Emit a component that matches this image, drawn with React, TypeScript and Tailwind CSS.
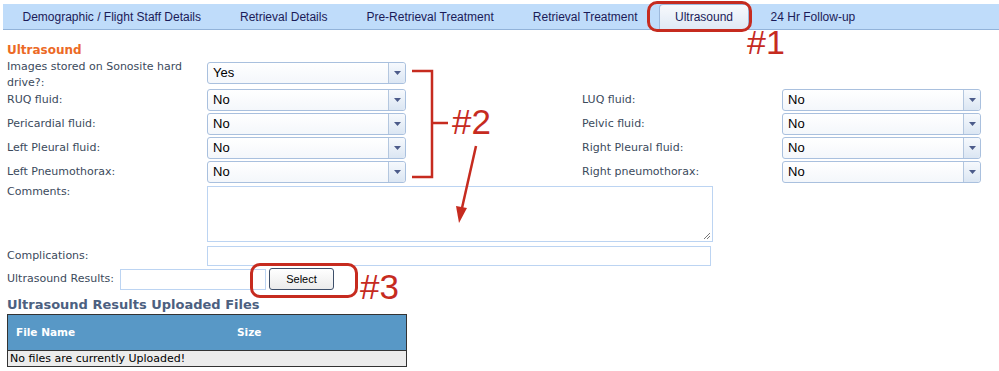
import React from "react"

const tabs = ["Demographic / Flight Staff Details", "Retrieval Details", "Pre-Retrieval Treatment", "Retrieval Treatment", "Ultrasound", "24 Hr Follow-up"]

const rows = [
    { left: "RUQ fluid:", right: "LUQ fluid:" },
    { left: "Pericardial fluid:", right: "Pelvic fluid:" },
    { left: "Left Pleural fluid:", right: "Right Pleural fluid:" },
    { left: "Left Pneumothorax:", right: "Right pneumothorax:" },
]

const Dropdown = ({ value }: { value: string }) => (
    <div className="w-[199px] h-[22px] flex border border-[#a9c0de] rounded-[3px] bg-gradient-to-b from-white to-[#f4f7fb] font-['Liberation_Sans'] text-[13px] text-black">
        <div className="flex-1 flex items-center pl-[5px]">{value}</div>
        <div className="w-[17px] flex items-center justify-center border-l border-[#b4c7df] bg-gradient-to-b from-[#f6f9fd] to-[#dbe6f3] rounded-r-[3px]">
            <svg width="7" height="4" viewBox="0 0 7 4"><path d="M0 0h7L3.5 4z" fill="#4c5b8a" /></svg>
        </div>
    </div>
)

const Label = ({ children, className = "" }: { children: React.ReactNode; className?: string }) => (
    <div className={`w-[200px] text-[11px] leading-[16px] text-[#3b4a5c] ${className}`}>{children}</div>
)

export default function App() {
    return (
        <div className="relative w-[999px] h-[371px] bg-white overflow-hidden font-['DejaVu_Sans',sans-serif]">
            {/* tab strip */}
            <div className="mt-[4px] ml-[3px] h-[26px] flex bg-[#bfdcfa] border-b border-[#92b3d9] font-['Liberation_Sans'] text-[12px] text-[#1b1b58]">
                {tabs.map((tab) =>
                    tab === "Ultrasound" ? (
                        <div key={tab} className="mx-[2px] px-[15px] flex items-center rounded-t-[4px] border border-b-0 border-[#9db9dc] bg-gradient-to-b from-[#f7f9fc] to-[#dfe9f5]">{tab}</div>
                    ) : (
                        <div key={tab} className="px-[19.5px] flex items-center">{tab}</div>
                    )
                )}
            </div>

            <div className="pl-[7px]">
                <div className="mt-[12px] h-[16px] leading-[16px] text-[12px] font-bold text-[#ec6a26]">Ultrasound</div>

                <div className="mt-[4px] h-[27px] flex items-start">
                    <Label className="-mt-[3px] pr-[20px]">Images stored on Sonosite hard drive?:</Label>
                    <Dropdown value="Yes" />
                </div>
                {rows.map((row) => (
                    <div key={row.left} className="h-[24px] flex items-start">
                        <Label className="h-[22px] flex items-center">{row.left}</Label>
                        <Dropdown value="No" />
                        <Label className="ml-[176px] h-[22px] flex items-center">{row.right}</Label>
                        <Dropdown value="No" />
                    </div>
                ))}

                <div className="mt-[1px] flex items-start">
                    <Label className="-mt-[2px]">Comments:</Label>
                    <div className="relative w-[506px] h-[56px] border border-[#bcd4f2]">
                        <svg className="absolute right-[1px] bottom-[1px]" width="8" height="8" viewBox="0 0 8 8">
                            <path d="M7 1L1 7M7 4L4 7" stroke="#777" strokeWidth="1" />
                        </svg>
                    </div>
                </div>

                <div className="mt-[4px] flex items-center">
                    <Label>Complications:</Label>
                    <div className="w-[504px] h-[20px] border border-[#bcd4f2]" />
                </div>

                <div className="mt-[2px] flex items-center">
                    <div className="w-[113px] text-[11px] leading-[16px] text-[#3b4a5c]">Ultrasound Results:</div>
                    <div className="w-[146px] h-[21px] border border-[#bcd4f2]" />
                    <button className="ml-[3px] w-[65px] h-[22px] rounded-[3px] border border-[#3d4f6a] bg-gradient-to-b from-white to-[#ebebeb] font-['Liberation_Sans'] text-[11px] text-black">Select</button>
                </div>

                <div className="mt-[6px] h-[18px] leading-[17px] text-[13px] font-bold text-[#4c6080]">Ultrasound Results Uploaded Files</div>
                <div className="w-[400px] border border-[#333]">
                    <div className="h-[35px] flex items-center bg-[#5898c6] text-white text-[10.5px] font-bold">
                        <div className="w-[229px] pl-[8px]">File Name</div>
                        <div>Size</div>
                    </div>
                    <div className="h-[16px] leading-[15px] border-t border-[#333] bg-[#ececec] text-[11px] text-black pl-[2px]">No files are currently Uploaded!</div>
                </div>
            </div>

            {/* annotations */}
            <div className="absolute left-[647px] top-[1px] w-[105px] h-[31px] rounded-[10px] border-[3px] border-[#c62b1f]" />
            <div className="absolute left-[747px] top-[22px] font-['Liberation_Sans'] text-[34px] leading-[40px] text-[#c62b1f]">#1</div>

            <svg className="absolute left-[405px] top-[65px]" width="90" height="165" viewBox="405 65 90 165">
                <path d="M412 71H432V177H412M432 123H448" fill="none" stroke="#c62b1f" strokeWidth="2.5" />
                <path d="M476 146L462 208" stroke="#c62b1f" strokeWidth="2.5" />
                <path d="M456 206L467 208L459 223Z" fill="#c62b1f" />
            </svg>
            <div className="absolute left-[452px] top-[102px] font-['Liberation_Sans'] text-[35px] leading-[40px] text-[#c62b1f]">#2</div>

            <div className="absolute left-[250px] top-[263px] w-[108px] h-[35px] rounded-[10px] border-[3px] border-[#c62b1f]" />
            <div className="absolute left-[360px] top-[267px] font-['Liberation_Sans'] text-[35px] leading-[40px] text-[#c62b1f]">#3</div>
        </div>
    )
}
